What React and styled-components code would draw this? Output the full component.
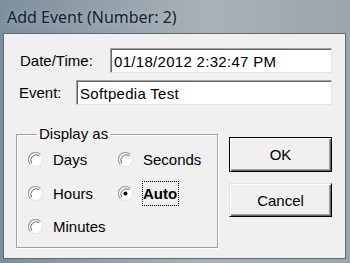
import React, { useState } from "react";
import styled, { createGlobalStyle } from "styled-components";

// #region CSS
const GlobalStyle = createGlobalStyle`
  html, body {
    margin: 0;
    padding: 0;
    background: #8d9aa3;
  }
`;

const Window = styled.div`
  width: 350px;
  height: 263px;
  box-sizing: border-box;
  display: flex;
  flex-direction: column;
  padding: 0 4px 4px 3px;
  background: linear-gradient(90deg, #7d8f9c 0%, #97a4ad 35%, #aab2b7 60%, #9ba5ab 100%);
  overflow: hidden;
`;

const TitleBar = styled.div`
  height: 33px;
  display: flex;
  align-items: center;
  padding-left: 4px;
  font-family: "Noto Sans", "Open Sans", sans-serif;
  font-size: 16px;
  color: #16203a;
  text-shadow: 0 0 6px rgba(255, 255, 255, 0.35);
`;

const Client = styled.div`
  flex: 1;
  display: flex;
  flex-direction: column;
  background: #f0f0f0;
  border: 1px solid #5f6b74;
  padding: 14px 13px 0 12px;
  font-family: "Liberation Sans", Arial, sans-serif;
  font-size: 15px;
  color: #000;
`;

const FieldRow = styled.div`
  display: flex;
  align-items: center;
  height: 25px;
  padding-left: ${(p) => p.$indent}px;
  margin-bottom: ${(p) => p.$gap || 0}px;
`;

const Label = styled.label`
  width: ${(p) => p.$width}px;
  flex-shrink: 0;
`;

const TextBox = styled.input`
  flex: 1;
  height: 25px;
  box-sizing: border-box;
  border: 1px solid;
  border-color: #a0a0a0 #e3e3e3 #e3e3e3 #a0a0a0;
  box-shadow: inset 1px 1px 0 #696969;
  background: #fff;
  padding: 1px 3px 0;
  font-family: "Liberation Sans", Arial, sans-serif;
  font-size: 15px;
  letter-spacing: 0.3px;
  color: #000;
  outline: none;
`;

const Bottom = styled.div`
  display: flex;
  align-items: flex-start;
  gap: 11px;
  margin-top: 21px;
`;

const GroupBox = styled.fieldset`
  margin: 0;
  width: 203px;
  height: 122px;
  box-sizing: border-box;
  padding: 1px 0 0 11px;
  border: 1px solid #a0a0a0;
  box-shadow: inset 1px 1px 0 #fff, 1px 1px 0 #fff;
  display: grid;
  grid-template-columns: 90px 1fr;
  grid-auto-rows: 33.5px;
  align-content: start;
`;

const Legend = styled.legend`
  margin-left: 9px;
  padding: 0 2px;
  font-size: 15px;
  line-height: 16px;
`;

const RadioItem = styled.div`
  display: flex;
  align-items: center;
  gap: 10px;
`;

const RadioText = styled.span`
  font-weight: ${(p) => (p.$focus ? "bold" : "normal")};
  border: 1px dotted ${(p) => (p.$focus ? "#000" : "transparent")};
  padding: 3px 1px 3px 0;
  margin-left: -1px;
`;

const Buttons = styled.div`
  display: flex;
  flex-direction: column;
  gap: 11px;
  margin-top: 11px;
`;

const Button = styled.button`
  width: 103px;
  height: ${(p) => (p.$default ? 35 : 34)}px;
  box-sizing: border-box;
  background: #f0f0f0;
  font-family: "Liberation Sans", Arial, sans-serif;
  font-size: 15px;
  color: #000;
  padding: 0;
  border: 1px solid;
  border-color: ${(p) => (p.$default ? "#000" : "#e3e3e3 #000 #000 #e3e3e3")};
  box-shadow: inset 1px 1px 0 #fff, inset -1px -1px 0 #696969, inset -2px -2px 0 #a0a0a0;
`;
// #endregion

const Radio = ({ checked }) => (
  <svg width="15" height="15" viewBox="0 0 15 15">
    <circle cx="7.5" cy="7.5" r="7" fill="#fff" />
    <path d="M12.5 2.5 A7 7 0 0 0 2.5 12.5" fill="none" stroke="#a0a0a0" strokeWidth="1.2" />
    <path d="M11.3 3.7 A5.5 5.5 0 0 0 3.7 11.3" fill="none" stroke="#696969" strokeWidth="1" />
    <path d="M2.5 12.5 A7 7 0 0 0 12.5 2.5" fill="none" stroke="#e6e6e6" strokeWidth="1.2" />
    {checked && <circle cx="7.5" cy="7.5" r="2" fill="#000" />}
  </svg>
);

const units = ["Days", "Seconds", "Hours", "Auto", "Minutes"];

export default function App() {
  const [unit, setUnit] = useState("Auto");

  return (
    <>
      <GlobalStyle />
      <Window>
        <TitleBar>Add Event (Number: 2)</TitleBar>
        <Client>
          <FieldRow $indent={4} $gap={7}>
            <Label $width={90}>Date/Time:</Label>
            <TextBox defaultValue="01/18/2012 2:32:47 PM" />
          </FieldRow>
          <FieldRow $indent={3}>
            <Label $width={57}>Event:</Label>
            <TextBox defaultValue="Softpedia Test" />
          </FieldRow>

          <Bottom>
            <GroupBox>
              <Legend>Display as</Legend>
              {units.map((name) => (
                <RadioItem key={name} onClick={() => setUnit(name)}>
                  <Radio checked={unit === name} />
                  <RadioText $focus={unit === name}>{name}</RadioText>
                </RadioItem>
              ))}
            </GroupBox>
            <Buttons>
              <Button $default>OK</Button>
              <Button>Cancel</Button>
            </Buttons>
          </Bottom>
        </Client>
      </Window>
    </>
  );
}
